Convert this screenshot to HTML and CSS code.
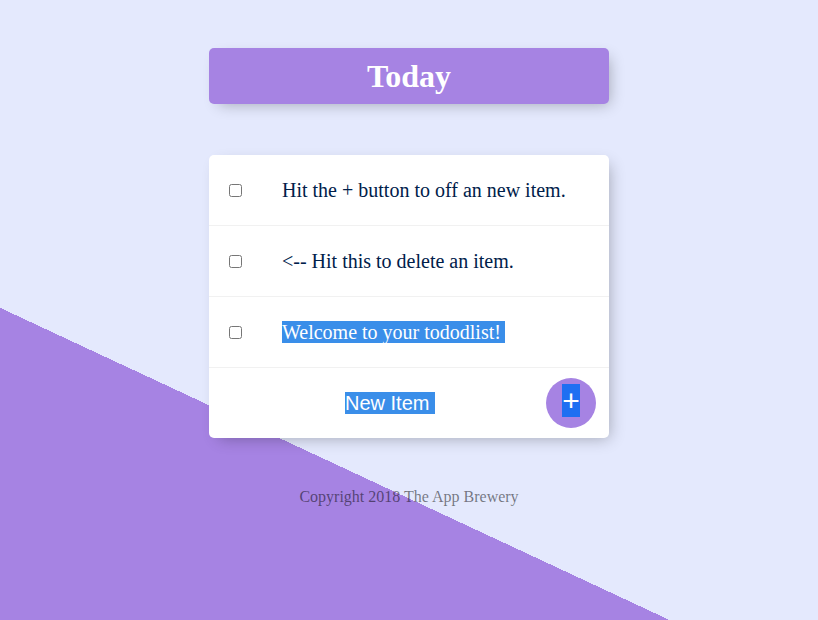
FILE: index.html
```html
<!DOCTYPE html>
<html>
<head>
<meta charset="utf-8">
<title>Today</title>
<link rel="stylesheet" href="styles.css">
</head>
<body>
<div class="page">
  <div class="box heading">
    <h1 class="title">Today</h1>
  </div>
  <div class="box list">
    <div class="item">
      <input class="check" type="checkbox">
      <p class="text">Hit the + button to off an new item.</p>
    </div>
    <div class="item">
      <input class="check" type="checkbox">
      <p class="text">&lt;-- Hit this to delete an item.</p>
    </div>
    <div class="item">
      <input class="check" type="checkbox">
      <p class="text"><span class="sel wide">Welcome to your tododlist! </span></p>
    </div>
    <div class="item form">
      <div class="newitem"><span class="sel">New Item&nbsp;</span></div>
      <div class="add"><span class="sel plus">+</span></div>
    </div>
  </div>
  <footer class="footer">Copyright 2018 The App Brewery</footer>
</div>
</body>
</html>
```

FILE: styles.css
```css
html {
  background-color: #E4E9FD;
  background-image: linear-gradient(25deg, #A683E3 50%, #E4E9FD 50%);
  min-height: 997px;
}
body {
  margin: 0;
  font-family: "Liberation Serif", "Times New Roman", serif;
}
.page {
  padding-top: 48px;
}
.box {
  width: 400px;
  margin: 0 auto;
  background: #fff;
  border-radius: 5px;
  box-shadow: 5px 5px 15px -5px rgba(0, 0, 0, 0.3);
}
.heading {
  background-color: #A683E3;
  text-align: center;
  height: 56px;
  display: flex;
  align-items: center;
  justify-content: center;
}
.title {
  margin: 0;
  color: #fff;
  font-size: 32px;
  font-weight: bold;
  line-height: 37px;
}
.list {
  margin-top: 51px;
}
.item {
  height: 70px;
  display: flex;
  align-items: center;
  border-bottom: 1px solid #F1F1F1;
}
.item:last-child {
  border-bottom: 0;
}
.check {
  margin: 0 20px;
  width: 13px;
  height: 13px;
  flex: none;
}
.text {
  margin: 0;
  padding: 0 20px;
  font-size: 20px;
  line-height: 23px;
  color: #00204a;
}
.sel {
  background: #3a8ee9;
  color: #fff;
}
.wide {
  padding-right: 4px;
}
.form {
  padding-left: 20px;
}
.newitem {
  width: 317px;
  text-align: center;
  font-family: "Liberation Sans", Arial, sans-serif;
  font-size: 20px;
  line-height: 22px;
  padding-left: 5px;
  box-sizing: border-box;
}
.add {
  width: 50px;
  height: 50px;
  border-radius: 50%;
  background-color: #A683E3;
  display: flex;
  justify-content: center;
  align-items: center;
  font-family: "Liberation Sans", Arial, sans-serif;
  font-size: 30px;
  padding-bottom: 6px;
  box-sizing: border-box;
}
.plus {
  background: #1f6ff2;
  line-height: 33px;
  display: inline-block;
}
.footer {
  margin-top: 50px;
  text-align: center;
  color: rgba(0, 0, 0, 0.5);
  font-size: 16px;
  line-height: 18px;
}
```
